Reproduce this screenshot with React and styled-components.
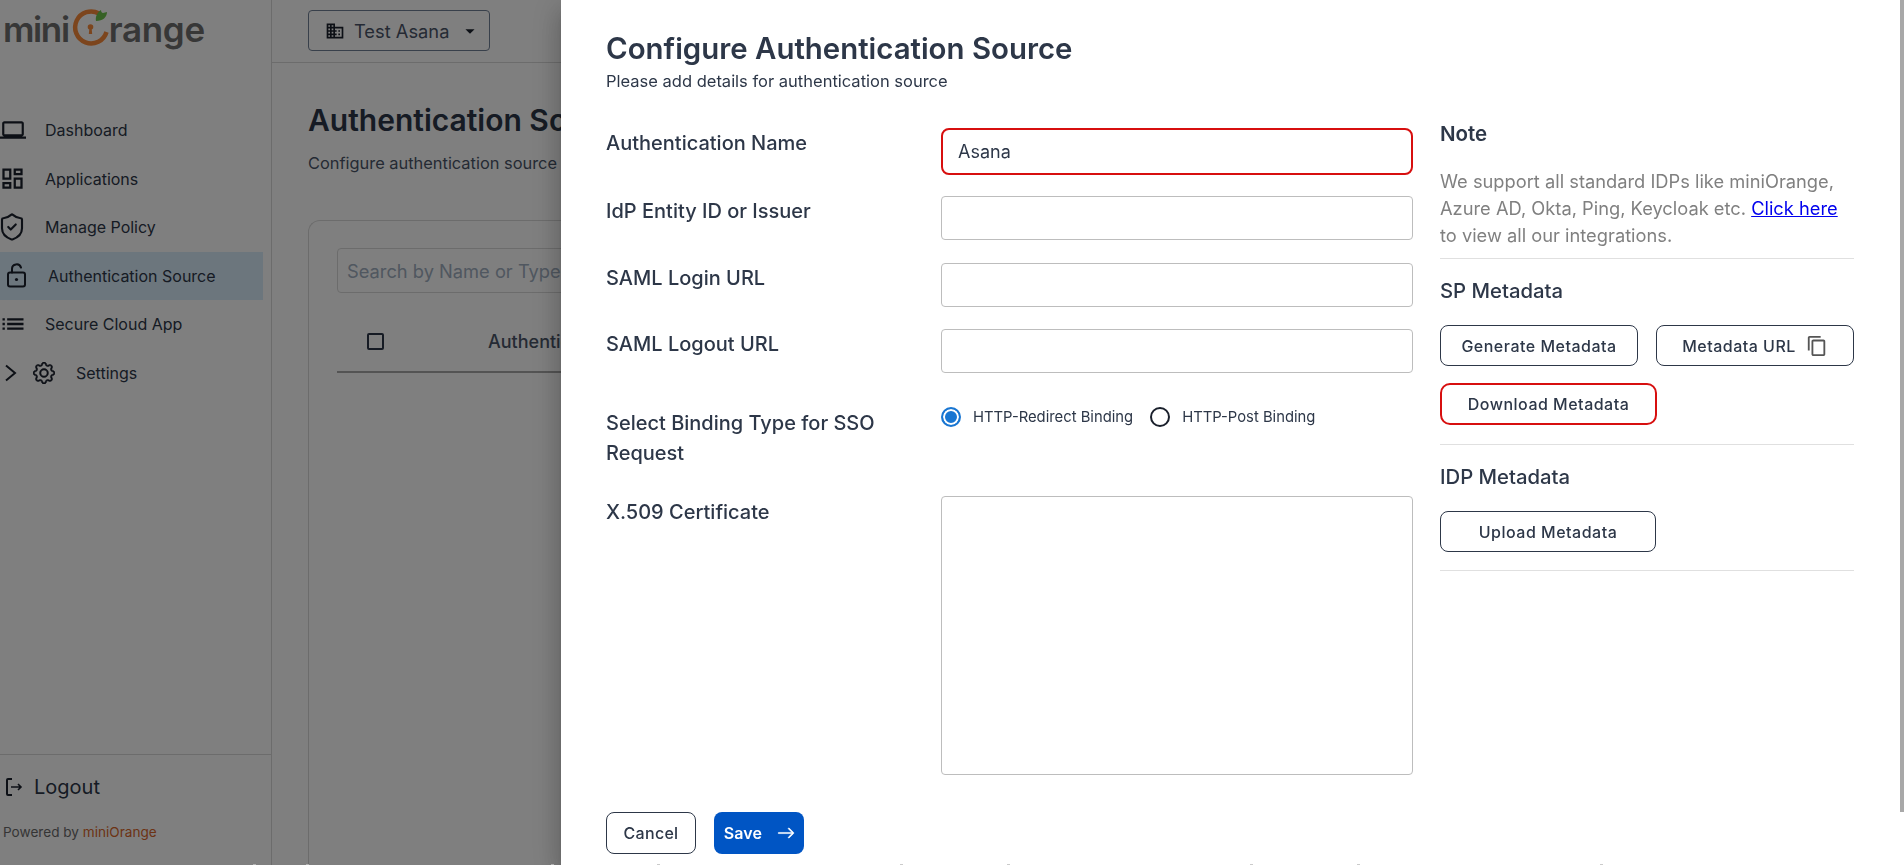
import React, { useState } from "react";
import styled, { createGlobalStyle } from "styled-components";
import {
  MdOutlineLaptop,
  MdOutlineDashboard,
  MdList,
  MdOutlineContentCopy,
  MdBusiness,
  MdArrowDropDown,
} from "react-icons/md";
import { LuShieldCheck } from "react-icons/lu";
import { BsGear, BsArrowRight } from "react-icons/bs";

const GlobalStyle = createGlobalStyle`
  html, body {
    margin: 0;
    height: 100%;
    overflow: hidden;
    background: #fff;
  }
  body {
    font-family: Inter, "Liberation Sans", sans-serif;
    color: #2d3748;
  }
  * {
    box-sizing: border-box;
  }
`;

const Page = styled.div`
  display: flex;
  height: 100vh;
  overflow: hidden;
`;

const Sidebar = styled.aside`
  width: 272px;
  flex-shrink: 0;
  display: flex;
  flex-direction: column;
  border-right: 1px solid #d9d9d9;
`;

const LogoRow = styled.div`
  height: 106px;
  padding-left: 3px;
  display: flex;
  align-items: flex-start;
  font-weight: 600;
  font-size: 35px;
  line-height: 1;
  color: #6e6e6e;
`;

const LogoText = styled.span`
  margin-top: 12px;
  letter-spacing: ${(p) => p.$spacing};
`;

const LogoMark = styled.svg`
  flex-shrink: 0;
`;

const Nav = styled.nav`
  display: flex;
  flex-direction: column;
  flex: 1;
`;

const NavItem = styled.a`
  width: 263px;
  height: 48px;
  margin-bottom: 0.6px;
  display: flex;
  align-items: center;
  font-size: 16px;
  color: #2d3748;
  padding-left: ${(p) => (p.$active ? "6px" : "0")};
  background: ${(p) => (p.$active ? "#d9ecfb" : "transparent")};

  svg {
    flex-shrink: 0;
    color: #1a202c;
  }
`;

const NavIcon = styled.span`
  width: ${(p) => p.$width || "45px"};
  margin-left: ${(p) => p.$shift || "0"};
  display: flex;
  align-items: center;
`;

const SideFooter = styled.div`
  height: 111px;
  border-top: 1px solid #d9d9d9;
  padding: 19px 0 0 3px;
`;

const Logout = styled.div`
  display: flex;
  align-items: center;
  gap: 11px;
  font-size: 20px;
  line-height: 26px;
  color: #2d3748;
  padding-left: 2px;
`;

const Powered = styled.div`
  margin-top: 23px;
  font-size: 13.6px;
  line-height: 18px;
  color: #6b6b6b;

  span {
    color: #d9662a;
  }
`;

const Main = styled.main`
  flex: 1;
  min-width: 0;
  display: flex;
  flex-direction: column;
`;

const TopBar = styled.header`
  height: 63px;
  padding: 10px 0 0 36px;
  border-bottom: 1px solid #d9d9d9;
`;

const OrgSelect = styled.div`
  width: 182px;
  height: 41px;
  display: flex;
  align-items: center;
  padding: 0 0 0 16px;
  border: 1px solid #718096;
  border-radius: 4px;
  font-size: 18.3px;
  white-space: nowrap;
  color: #4a5568;

  svg:first-child {
    color: #1a202c;
    margin-right: 9px;
  }
  svg:last-child {
    color: #1a202c;
    margin-left: 10px;
  }
`;

const Content = styled.section`
  flex: 1;
  padding: 38px 0 0 36px;
  display: flex;
  flex-direction: column;
`;

const PageTitle = styled.h1`
  margin: 0;
  font-size: 30px;
  line-height: 38px;
  font-weight: 600;
  white-space: nowrap;
  color: #2d3748;
`;

const PageSub = styled.p`
  margin: 13px 0 0;
  font-size: 16.4px;
  line-height: 22px;
  white-space: nowrap;
  color: #4a5568;
`;

const Card = styled.div`
  flex: 1;
  margin-top: 46px;
  padding: 27px 0 0 28px;
  border: 1px solid #d9d9d9;
  border-right: none;
  border-bottom: none;
  border-radius: 12px 0 0 0;
`;

const Search = styled.div`
  height: 45px;
  display: flex;
  align-items: center;
  padding-left: 9px;
  border: 1px solid #d9d9d9;
  border-radius: 4px;
  font-size: 18.3px;
  color: #a0aec0;
  white-space: nowrap;
`;

const TableHead = styled.div`
  height: 80px;
  display: flex;
  align-items: center;
  padding: 18px 0 0 30px;
  border-bottom: 2px solid #a8a8a8;
  font-size: 18px;
  font-weight: 500;
  color: #4a5568;
  white-space: nowrap;
`;

const Check = styled.span`
  width: 17px;
  height: 17px;
  border: 2px solid #2d3748;
  border-radius: 2px;
  margin-right: 104px;
`;

const Backdrop = styled.div`
  position: fixed;
  inset: 0;
  background: rgba(0, 0, 0, 0.5);
`;

const Drawer = styled.div`
  position: fixed;
  left: 561px;
  top: 0;
  right: 0;
  bottom: 0;
  padding: 0 46px 0 45px;
  background: #fff;
  overflow: hidden;
  box-shadow: 0 8px 10px -5px rgba(0, 0, 0, 0.2), 0 16px 24px 2px rgba(0, 0, 0, 0.14),
    0 6px 30px 5px rgba(0, 0, 0, 0.12);
`;

const ScrollThumb = styled.div`
  position: absolute;
  top: 0;
  right: 0;
  width: 4px;
  height: 812px;
  background: #a8a8a8;
`;

const Tick = styled.i`
  position: fixed;
  bottom: 0;
  left: ${(p) => p.$x}px;
  width: 3px;
  height: 1px;
  background: rgba(190, 190, 190, 0.8);
`;

const DrawerTitle = styled.h2`
  margin: 0;
  padding-top: 30px;
  font-size: 29.4px;
  line-height: 38px;
  font-weight: 600;
  color: #2d3748;
`;

const DrawerSub = styled.p`
  margin: 1px 0 0;
  font-size: 16.5px;
  line-height: 24px;
  color: #2d3748;
`;

const Columns = styled.div`
  display: grid;
  grid-template-columns: 807px 414px;
  column-gap: 27px;
  align-items: start;
  margin-top: 35px;
`;

const Field = styled.div`
  display: grid;
  grid-template-columns: 335px 472px;
  margin-bottom: ${(p) => p.$gap || "22px"};
`;

const Label = styled.label`
  font-size: 20px;
  line-height: 30px;
  font-weight: 500;
  color: #2d3748;
  width: 290px;
`;

const Input = styled.input`
  width: 472px;
  height: ${(p) => (p.$error ? "47px" : "44px")};
  padding: 0 15px;
  border: ${(p) => (p.$error ? "2px solid #d70f0f" : "1px solid #bdbdbd")};
  border-radius: ${(p) => (p.$error ? "8px" : "4px")};
  outline: none;
  background: #fff;
  font-family: inherit;
  font-size: 18px;
  color: #2d3748;
`;

const Certificate = styled.textarea`
  display: block;
  width: 472px;
  height: 279px;
  margin-top: -1px;
  border: 1px solid #bdbdbd;
  border-radius: 4px;
  resize: none;
  outline: none;
`;

const RadioGroup = styled.div`
  display: flex;
  align-items: flex-start;
  margin-top: -2px;
`;

const RadioOption = styled.label`
  display: flex;
  align-items: center;
  height: 22px;
  font-size: 14.8px;
  font-weight: 400;
  white-space: nowrap;
  color: #2d3748;
  margin-right: 17px;
`;

const RadioDot = styled.span`
  width: 20px;
  height: 20px;
  margin-right: 12px;
  border-radius: 50%;
  border: 2px solid ${(p) => (p.$checked ? "#1976d2" : "#1a202c")};
  background: ${(p) => (p.$checked ? "#1976d2" : "#fff")};
  box-shadow: ${(p) => (p.$checked ? "inset 0 0 0 2px #fff" : "none")};
`;

const Actions = styled.div`
  display: flex;
  gap: 18px;
  margin-top: 37px;
`;

const CancelButton = styled.button`
  width: 90px;
  height: 42px;
  border: 1px solid #2d3748;
  border-radius: 8px;
  background: #fff;
  font-family: inherit;
  font-size: 16px;
  font-weight: 500;
  letter-spacing: 0.3px;
  color: #2d3748;
`;

const SaveButton = styled.button`
  width: 90px;
  height: 42px;
  display: flex;
  align-items: center;
  justify-content: center;
  gap: 15px;
  padding: 0 0 0 1px;
  border: none;
  border-radius: 8px;
  background: #0055c4;
  font-family: inherit;
  font-size: 16px;
  font-weight: 600;
  letter-spacing: 0.1px;
  color: #fff;

  svg {
    stroke: #fff;
    stroke-width: 0.5px;
  }
`;

const Aside = styled.div`
  display: flex;
  flex-direction: column;
  align-items: flex-start;
  margin-top: -8px;
`;

const NoteTitle = styled.h3`
  margin: 0;
  font-size: 20.5px;
  line-height: 28px;
  font-weight: 600;
  color: #2d3748;
`;

const NoteText = styled.p`
  margin: 20px 0 0;
  font-size: 18.3px;
  line-height: 27px;
  color: #808080;

  a {
    color: #0000ee;
    text-decoration: underline;
  }
`;

const Section = styled.div`
  width: 100%;
  border-top: 1px solid #e0e0e0;
  margin-top: ${(p) => p.$top || "0"};
  padding-top: 19px;
`;

const SectionTitle = styled.h4`
  margin: 0;
  font-size: 20.3px;
  line-height: 26px;
  font-weight: 500;
  color: #2d3748;
`;

const ButtonRow = styled.div`
  display: flex;
  flex-wrap: wrap;
  gap: 17px 18px;
  margin-top: 21px;
`;

const OutlineButton = styled.button`
  width: ${(p) => p.$width || "198px"};
  height: ${(p) => (p.$error ? "42px" : "41px")};
  display: flex;
  align-items: center;
  justify-content: center;
  gap: 10px;
  padding: 0;
  border: ${(p) => (p.$error ? "2px solid #d70f0f" : "1px solid #2d3748")};
  border-radius: ${(p) => (p.$error ? "10px" : "8px")};
  background: #fff;
  font-family: inherit;
  font-size: 16px;
  font-weight: 500;
  letter-spacing: 0.5px;
  color: #2d3748;

  svg {
    color: #555;
  }
`;

const LockIcon = () => (
  <svg width="22" height="26" viewBox="0 0 22 26" fill="none" stroke="currentColor" strokeWidth="2">
    <rect x="2" y="9.5" width="17" height="14" rx="2" />
    <path d="M6 9.5V6a4.6 4.6 0 0 1 9-1.4" strokeLinecap="round" />
    <circle cx="10.5" cy="16.5" r="1.6" fill="currentColor" stroke="none" />
  </svg>
);

const ChevronIcon = () => (
  <svg width="17" height="18" viewBox="0 0 17 18" fill="none" stroke="currentColor" strokeWidth="2">
    <path d="M6 1.5l9 7.5-9 7.5" />
  </svg>
);

const LogoutIcon = () => (
  <svg width="18" height="20" viewBox="0 0 18 20" fill="none" stroke="#1a202c" strokeWidth="2">
    <path d="M7 2H3a1 1 0 0 0-1 1v14a1 1 0 0 0 1 1h4" />
    <path d="M6 10h10M13 7l3 3-3 3" strokeWidth="1.6" />
  </svg>
);

const Logo = () => (
  <LogoRow>
    <LogoText $spacing="-1.4px">mini</LogoText>
    <LogoMark width="40" height="50" viewBox="0 0 40 50" fill="none">
      <path d="M30 13.5A16 16 0 1 0 37.5 32" stroke="#f98a3a" strokeWidth="4.5" />
      <path d="M27 21c-1-5 2-9 5-11 0 2 1 3 2 3l4-1c0 5-4 9-11 9z" fill="#6cc24a" />
      <circle cx="21.5" cy="27" r="2.8" fill="#f98a3a" />
      <path d="M20.4 28h2.2l.6 6h-3.4z" fill="#f98a3a" />
    </LogoMark>
    <LogoText $spacing="-0.3px">range</LogoText>
  </LogoRow>
);

const navItems = [
  { label: "Dashboard", icon: <MdOutlineLaptop size={26} /> },
  { label: "Applications", icon: <MdOutlineDashboard size={27} />, shift: "-1px", width: "46px" },
  { label: "Manage Policy", icon: <LuShieldCheck size={30} strokeWidth={1.7} />, shift: "-3px", width: "48px" },
  { label: "Authentication Source", icon: <LockIcon />, active: true, width: "42px" },
  { label: "Secure Cloud App", icon: <MdList size={28} />, shift: "-1px", width: "46px" },
];

const tickOffsets = [253, 306, 551, 657, 900, 1007, 1250, 1357, 1600];

const App = () => {
  const [name, setName] = useState("Asana");

  return (
    <>
      <GlobalStyle />
      <Page>
        <Sidebar>
          <Logo />
          <Nav>
            {navItems.map((item) => (
              <NavItem key={item.label} $active={item.active}>
                <NavIcon $width={item.width} $shift={item.shift}>
                  {item.icon}
                </NavIcon>
                {item.label}
              </NavItem>
            ))}
            <NavItem>
              <NavIcon $width="33px">
                <ChevronIcon />
              </NavIcon>
              <NavIcon $width="43px">
                <BsGear size={22} strokeWidth={0.4} />
              </NavIcon>
              Settings
            </NavItem>
          </Nav>
          <SideFooter>
            <Logout>
              <LogoutIcon />
              Logout
            </Logout>
            <Powered>
              Powered by <span>miniOrange</span>
            </Powered>
          </SideFooter>
        </Sidebar>
        <Main>
          <TopBar>
            <OrgSelect>
              <MdBusiness size={20} />
              Test Asana
              <MdArrowDropDown size={22} />
            </OrgSelect>
          </TopBar>
          <Content>
            <PageTitle>Authentication Source</PageTitle>
            <PageSub>Configure authentication source</PageSub>
            <Card>
              <Search>Search by Name or Type</Search>
              <TableHead>
                <Check />
                Authentication Name
              </TableHead>
            </Card>
          </Content>
        </Main>
      </Page>
      <Backdrop />
      <Drawer>
        <DrawerTitle>Configure Authentication Source</DrawerTitle>
        <DrawerSub>Please add details for authentication source</DrawerSub>
        <Columns>
          <div>
            <Field $gap="21px">
              <Label>Authentication Name</Label>
              <Input $error value={name} onChange={(e) => setName(e.target.value)} />
            </Field>
            <Field $gap="23px">
              <Label>IdP Entity ID or Issuer</Label>
              <Input />
            </Field>
            <Field $gap="22px">
              <Label>SAML Login URL</Label>
              <Input />
            </Field>
            <Field $gap="35px">
              <Label>SAML Logout URL</Label>
              <Input />
            </Field>
            <Field $gap="29px">
              <Label>Select Binding Type for SSO Request</Label>
              <RadioGroup>
                <RadioOption>
                  <RadioDot $checked />
                  HTTP-Redirect Binding
                </RadioOption>
                <RadioOption>
                  <RadioDot />
                  HTTP-Post Binding
                </RadioOption>
              </RadioGroup>
            </Field>
            <Field $gap="0">
              <Label>X.509 Certificate</Label>
              <Certificate />
            </Field>
            <Actions>
              <CancelButton>Cancel</CancelButton>
              <SaveButton>
                Save
                <BsArrowRight size={18} />
              </SaveButton>
            </Actions>
          </div>
          <Aside>
            <NoteTitle>Note</NoteTitle>
            <NoteText>
              We support all standard IDPs like miniOrange, Azure AD, Okta, Ping, Keycloak etc.{" "}
              <a href="#integrations">Click here</a> to view all our integrations.
            </NoteText>
            <Section $top="9px">
              <SectionTitle>SP Metadata</SectionTitle>
              <ButtonRow>
                <OutlineButton>Generate Metadata</OutlineButton>
                <OutlineButton>
                  Metadata URL
                  <MdOutlineContentCopy size={22} />
                </OutlineButton>
                <OutlineButton $error $width="217px">
                  Download Metadata
                </OutlineButton>
              </ButtonRow>
            </Section>
            <Section $top="19px">
              <SectionTitle>IDP Metadata</SectionTitle>
              <ButtonRow>
                <OutlineButton $width="216px">Upload Metadata</OutlineButton>
              </ButtonRow>
            </Section>
            <Section $top="18px" />
          </Aside>
        </Columns>
        <ScrollThumb />
      </Drawer>
      {tickOffsets.map((x) => (
        <Tick key={x} $x={x} />
      ))}
    </>
  );
};

export default App;
